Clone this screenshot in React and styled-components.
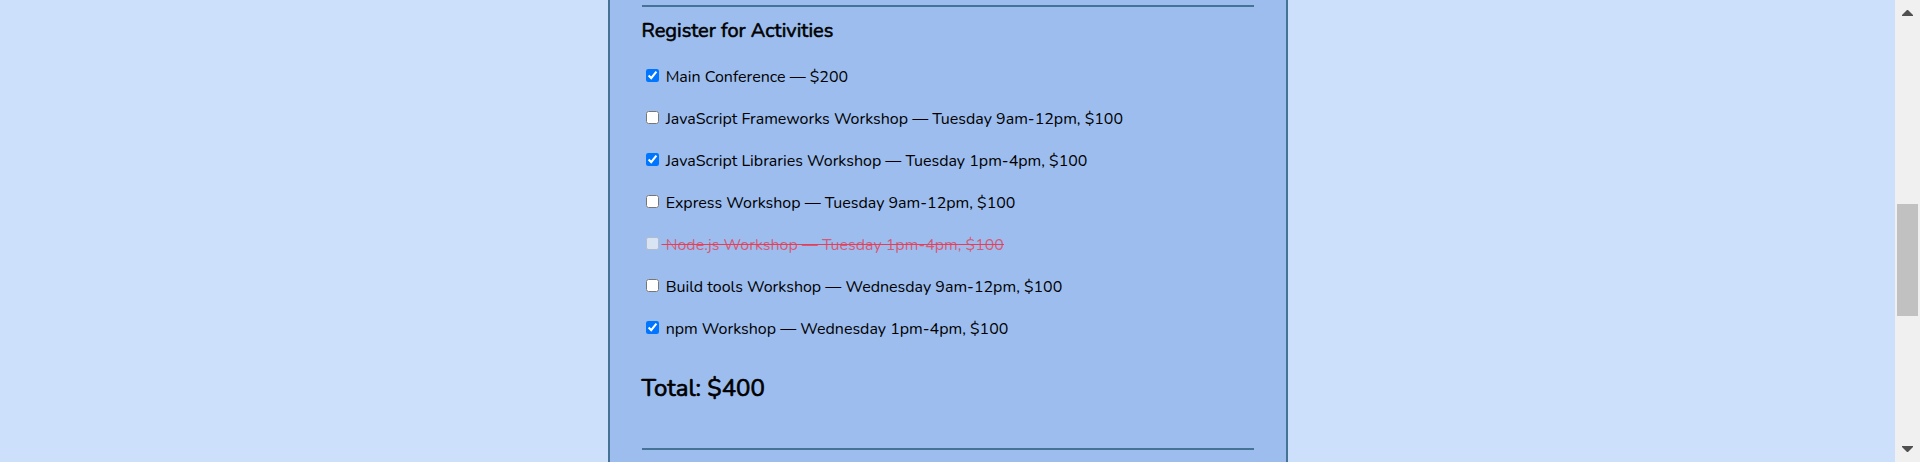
import React, { useState } from "react";
import styled, { createGlobalStyle } from "styled-components";

const GlobalStyle = createGlobalStyle`
  *, *::before, *::after { box-sizing: border-box; }
  body {
    margin: 0;
    background: #ccdffb;
    color: #000;
    font-family: Nunito, "Open Sans", "Noto Sans", sans-serif;
    font-size: 16px;
    font-weight: 400;
  }
`;

const Page = styled.div`
  display: flex;
  min-height: 100vh;
`;

const Content = styled.main`
  flex: 1;
  display: flex;
  justify-content: center;
`;

const Form = styled.form`
  width: 100%;
  max-width: 680px;
  padding: 5px 32px 12px;
  background: #9cbdee;
  border: solid #457396;
  border-width: 0 2px;
`;

const Activities = styled.fieldset`
  margin: 0;
  padding: 10px 0 42px;
  border: solid #457396;
  border-width: 2px 0;
  min-width: 0;
`;

const Legend = styled.h2`
  margin: 0 0 20px;
  font-size: 20px;
  line-height: 28px;
  font-weight: 400;
  -webkit-text-stroke: 0.03em currentColor;
`;

const ActivityList = styled.div`
  display: flex;
  flex-direction: column;
  align-items: flex-start;
  gap: 18px;
`;

const Activity = styled.label`
  display: flex;
  align-items: center;
  line-height: 24px;
  white-space: pre;
`;

const ActivityText = styled.span`
  color: ${(p) => (p.$disabled ? "rgb(230 57 80 / 0.75)" : "inherit")};
  text-decoration: ${(p) => (p.$disabled ? "line-through #e0405a" : "none")};
`;

const Checkbox = styled.input`
  width: 13px;
  height: 13px;
  margin: 0 3px 3px 4px;
`;

const Total = styled.p`
  margin: 29px 0 0;
  font-size: 24px;
  line-height: 36px;
  font-weight: 400;
  -webkit-text-stroke: 0.03em currentColor;
`;

const Scrollbar = styled.div`
  display: flex;
  flex-direction: column;
  flex: 0 0 25px;
  padding: 10px 2px;
  background: #f0f0f0;
`;

const Arrow = styled.svg`
  display: block;
  width: 11px;
  height: 6px;
  margin: 0 5px;
  fill: #505050;
`;

const Track = styled.div`
  flex: 1;
  display: grid;
  grid-template-rows: 188fr 112fr 130fr;
`;

const Thumb = styled.div`
  grid-row: 2;
  background: #c1c1c1;
`;

const activities = [
  { name: "all", text: "Main Conference — $200", cost: 200, slot: "all" },
  { name: "js-frameworks", text: "JavaScript Frameworks Workshop — Tuesday 9am-12pm, $100", cost: 100, slot: "tue-am" },
  { name: "js-libs", text: "JavaScript Libraries Workshop — Tuesday 1pm-4pm, $100", cost: 100, slot: "tue-pm" },
  { name: "express", text: "Express Workshop — Tuesday 9am-12pm, $100", cost: 100, slot: "tue-am" },
  { name: "node", text: "Node.js Workshop — Tuesday 1pm-4pm, $100", cost: 100, slot: "tue-pm" },
  { name: "build-tools", text: "Build tools Workshop — Wednesday 9am-12pm, $100", cost: 100, slot: "wed-am" },
  { name: "npm", text: "npm Workshop — Wednesday 1pm-4pm, $100", cost: 100, slot: "wed-pm" },
];

export default function App() {
  const [selected, setSelected] = useState(["all", "js-libs", "npm"]);

  const toggle = (name) =>
    setSelected((names) =>
      names.includes(name) ? names.filter((n) => n !== name) : [...names, name]
    );

  const chosen = activities.filter((a) => selected.includes(a.name));
  const total = chosen.reduce((sum, a) => sum + a.cost, 0);

  return (
    <>
      <GlobalStyle />
      <Page>
        <Content>
          <Form>
            <Activities aria-labelledby="activities-title">
              <Legend id="activities-title">Register for Activities</Legend>
              <ActivityList>
                {activities.map((a) => {
                  const disabled = chosen.some((c) => c.slot === a.slot && c.name !== a.name);
                  return (
                    <Activity key={a.name} htmlFor={a.name}>
                      <Checkbox
                        type="checkbox"
                        id={a.name}
                        name={a.name}
                        checked={selected.includes(a.name)}
                        disabled={disabled}
                        onChange={() => toggle(a.name)}
                      />
                      <ActivityText $disabled={disabled}>{" " + a.text}</ActivityText>
                    </Activity>
                  );
                })}
              </ActivityList>
              <Total>Total: ${total}</Total>
            </Activities>
          </Form>
        </Content>
        <Scrollbar aria-hidden="true">
          <Arrow viewBox="0 0 11 6"><path d="M5 0h1L11 5v1H0V5z" /></Arrow>
          <Track><Thumb /></Track>
          <Arrow viewBox="0 0 11 6"><path d="M0 0h11v1L6 6H5L0 1z" /></Arrow>
        </Scrollbar>
      </Page>
    </>
  );
}
